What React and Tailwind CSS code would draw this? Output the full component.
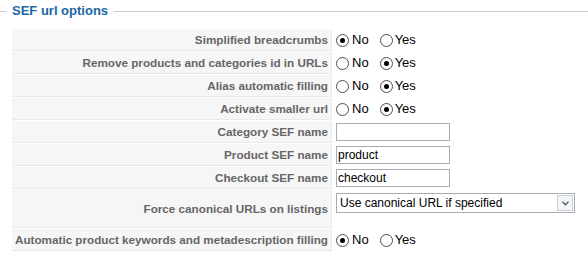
// SEF url options fieldset
const font = { fontFamily: '"Liberation Sans", Arial, sans-serif' };

const Radio = ({ checked }) => (
    <span className="w-[13px] h-[13px] rounded-full border border-[#4d4d4d] bg-white flex items-center justify-center shrink-0">
        {checked && <span className="w-[5px] h-[5px] rounded-full bg-black" />}
    </span>
);

const YesNo = ({ value }) => (
    <div className="flex items-center text-[13px] text-black">
        <Radio checked={value === 0} />
        <span className="ml-[3px]">No</span>
        <span className="ml-[11px]"><Radio checked={value === 1} /></span>
        <span className="ml-[2px]">Yes</span>
    </div>
);

const TextInput = ({ value }) => (
    <div className="w-[114px] h-[18px] border border-[#a5acb2] bg-white text-[12px] text-black leading-[16px] pl-[1px]">
        {value}
    </div>
);

const Select = ({ value }) => (
    <div className="w-[239px] h-[20px] border border-[#a5acb2] bg-white flex items-center text-[12px] text-black">
        <span className="flex-1 pl-[3px]">{value}</span>
        <span className="w-[16px] h-[16px] mr-[1px] border border-[#c9ced4] bg-[#f3f5f8] flex items-center justify-center">
            <svg width="7" height="5" viewBox="0 0 7 5">
                <path d="M0.5 0.8 L3.5 3.8 L6.5 0.8" fill="none" stroke="#4d5b6b" strokeWidth="1.3" />
            </svg>
        </span>
    </div>
);

const Row = ({ label, tall, children }) => (
    <div className={`flex gap-px ${tall ? "h-[38px]" : "h-[22px]"}`}>
        <div className="w-[320px] shrink-0 bg-[#f6f6f6] border-b border-r border-[#e9e9e9] flex items-center justify-end pr-[3px] text-[11.7px] font-bold text-[#666] whitespace-nowrap">
            {label}
        </div>
        <div className={`flex pl-[3px] ${tall ? "items-start pt-[3px]" : "items-center"}`}>{children}</div>
    </div>
);

const App = () => {
    return (
        <div className="w-[588px] h-[259px] bg-white overflow-hidden" style={font}>
            <div className="flex items-center h-[22px]">
                <span className="w-[6px] h-px bg-[#cccccc]" />
                <span className="px-[6px] text-[13px] font-bold text-[#1a67a3]">SEF url options</span>
                <span className="flex-1 h-px bg-[#cccccc]" />
            </div>
            <div className="mt-[7px] ml-[12px] flex flex-col gap-px">
                <Row label="Simplified breadcrumbs"><YesNo value={0} /></Row>
                <Row label="Remove products and categories id in URLs"><YesNo value={1} /></Row>
                <Row label="Alias automatic filling"><YesNo value={1} /></Row>
                <Row label="Activate smaller url"><YesNo value={1} /></Row>
                <Row label="Category SEF name"><TextInput value="" /></Row>
                <Row label="Product SEF name"><TextInput value="product" /></Row>
                <Row label="Checkout SEF name"><TextInput value="checkout" /></Row>
                <Row label="Force canonical URLs on listings" tall>
                    <Select value="Use canonical URL if specified" />
                </Row>
                <Row label="Automatic product keywords and metadescription filling"><YesNo value={0} /></Row>
            </div>
        </div>
    );
};

export default App;
